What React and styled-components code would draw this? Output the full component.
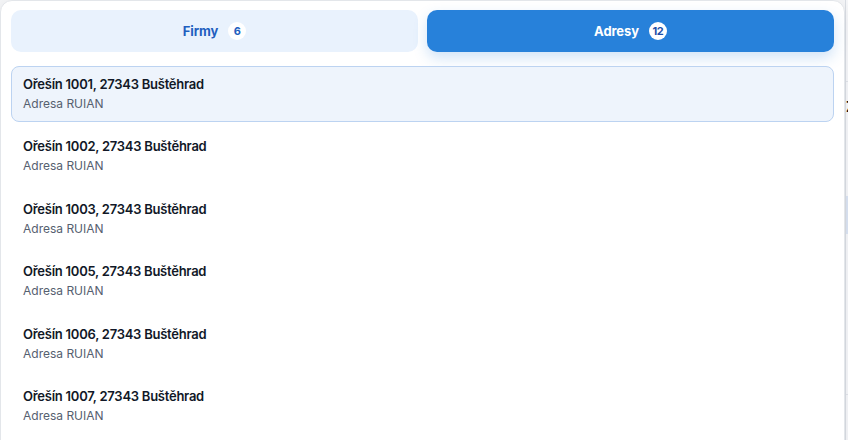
import React from "react";
import styled, { createGlobalStyle } from "styled-components";

const Global = createGlobalStyle`
  html, body { margin: 0; padding: 0; background: #f4f5f7; }
  body { font-family: Inter, "Noto Sans", "Liberation Sans", sans-serif; }
  * { box-sizing: border-box; }
`;

const Page = styled.div`
  display: flex;
  width: 848px;
  height: 440px;
  overflow: hidden;
  background: #f4f5f7;
`;

const Panel = styled.div`
  width: 845px;
  flex: none;
  height: 460px;
  background: #fff;
  border: 1px solid #e3e6ea;
  border-radius: 12px 12px 0 0;
  box-shadow: 0 4px 16px rgba(15, 23, 42, 0.08);
  padding: 9px 10px 0 10px;
  display: flex;
  flex-direction: column;
  position: relative;
  z-index: 1;
`;

const Tabs = styled.div`
  display: grid;
  grid-template-columns: 1fr 1fr;
  gap: 9px;
`;

const Tab = styled.div`
  height: 42px;
  border-radius: 10px;
  display: flex;
  align-items: center;
  justify-content: center;
  gap: 10px;
  font-size: 13px;
  font-weight: 700;
  letter-spacing: -0.1px;
  background: ${(p) => (p.$active ? "#2781da" : "#e9f2fd")};
  color: ${(p) => (p.$active ? "#ffffff" : "#1f5fbf")};
  box-shadow: ${(p) => (p.$active ? "0 6px 14px rgba(39, 129, 218, 0.22)" : "none")};
`;

const Badge = styled.span`
  min-width: 18px;
  height: 18px;
  padding: 0 3px;
  border-radius: 9px;
  background: #fff;
  color: ${(p) => (p.$active ? "#1e4fa8" : "#1f5fbf")};
  font-size: 11px;
  font-weight: 700;
  display: inline-flex;
  align-items: center;
  justify-content: center;
  letter-spacing: -0.3px;
`;

const List = styled.div`
  display: flex;
  flex-direction: column;
  gap: 6.4px;
  margin-top: 14px;
`;

const Row = styled.div`
  border: 1px solid ${(p) => (p.$selected ? "#bcd3f1" : "transparent")};
  background: ${(p) => (p.$selected ? "#eef4fc" : "transparent")};
  border-radius: 8px;
  padding: 8px 11px 9px;
  display: flex;
  flex-direction: column;
  gap: 3px;
`;

const Title = styled.div`
  font-size: 13px;
  line-height: 18px;
  font-weight: 600;
  color: #111827;
  letter-spacing: -0.25px;
`;

const Sub = styled.div`
  font-size: 12px;
  line-height: 16px;
  color: #56606f;
`;

const Aside = styled.div`
  flex: 1;
  display: flex;
  flex-direction: column;
  background: #f6f7f9;
  border-left: 1px solid #dadee4;
`;

const AsideCell = styled.div`
  height: ${(p) => p.$h}px;
  flex: none;
  background: ${(p) => p.$bg || "transparent"};
  border-bottom: ${(p) => (p.$line ? "1px solid #e2e5ea" : "none")};
  font-size: 14px;
  font-weight: 700;
  color: #111;
  display: flex;
  align-items: center;
  overflow: hidden;
  white-space: nowrap;
`;

const items = [
  "Ořešín 1001, 27343 Buštěhrad",
  "Ořešín 1002, 27343 Buštěhrad",
  "Ořešín 1003, 27343 Buštěhrad",
  "Ořešín 1005, 27343 Buštěhrad",
  "Ořešín 1006, 27343 Buštěhrad",
  "Ořešín 1007, 27343 Buštěhrad",
];

export default function App() {
  return (
    <>
      <Global />
      <Page>
        <Panel>
          <Tabs>
            <Tab>
              Firmy <Badge>6</Badge>
            </Tab>
            <Tab $active>
              Adresy <Badge $active>12</Badge>
            </Tab>
          </Tabs>
          <List>
            {items.map((t, i) => (
              <Row key={t} $selected={i === 0}>
                <Title>{t}</Title>
                <Sub>Adresa RUIAN</Sub>
              </Row>
            ))}
          </List>
        </Panel>
        <Aside>
          <AsideCell $h={82} $line />
          <AsideCell $h={48}>Z</AsideCell>
          <AsideCell $h={66} />
          <AsideCell $h={38} $bg="#dbe5f3" />
          <AsideCell $h={161} $line />
          <AsideCell $h={45} />
        </Aside>
      </Page>
    </>
  );
}
